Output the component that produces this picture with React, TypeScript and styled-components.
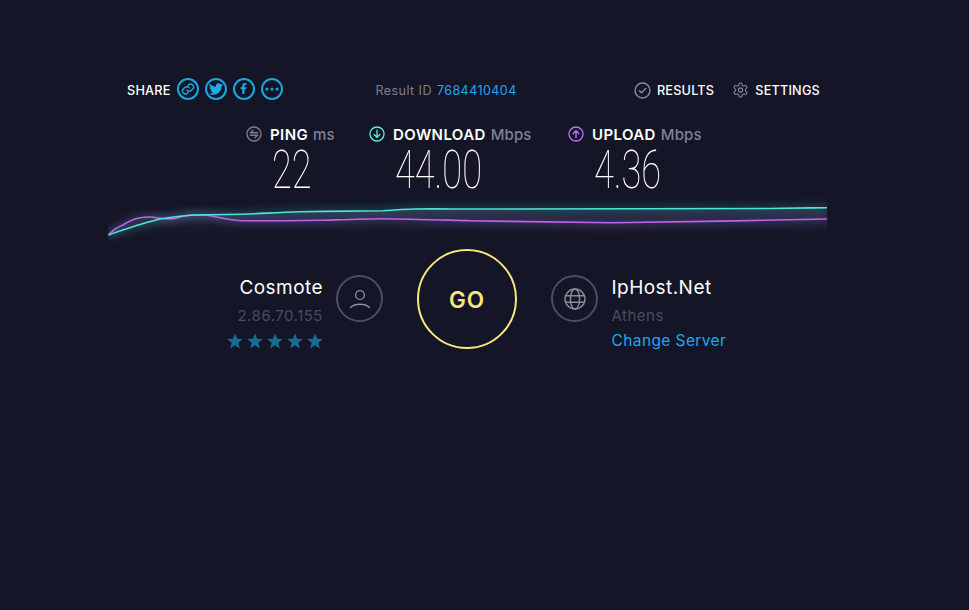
import * as React from 'react'
import styled, { createGlobalStyle } from 'styled-components'
import { FaFacebookF, FaTwitter } from 'react-icons/fa'

const GlobalStyle = createGlobalStyle`
  html, body {
    background: #141526;
    margin: 0;
    min-height: 610px;
    overflow: hidden;
  }
  body {
    color: #fff;
    font-family: Inter, "Open Sans", sans-serif;
  }
`

const Page = styled.div`
  display: flex;
  flex-direction: column;
  padding: 78px 0 0 108px;
  width: 719px;
`

const Header = styled.header`
  align-items: center;
  display: flex;
  height: 24px;
  padding: 0 7px 0 19px;
`

const ShareGroup = styled.div`
  align-items: center;
  display: flex;
  gap: 6px;
`

const NavLabel = styled.span`
  color: #fff;
  font-size: 12.7px;
  font-weight: 500;
  letter-spacing: 0.2px;
`

const ShareButton = styled.span`
  align-items: center;
  border: 2px solid #1ca5de;
  border-radius: 50%;
  box-sizing: border-box;
  color: #1cade6;
  display: flex;
  height: 22px;
  justify-content: center;
  margin-bottom: 3px;
  width: 22px;
`

const ResultId = styled.div`
  color: #7b8098;
  font-size: 12.5px;
  letter-spacing: 0.45px;
  margin-left: 93px;
`

const ResultNumber = styled.span`
  color: #1ca9f2;
  margin-left: 5px;
`

const NavGroup = styled.nav`
  align-items: center;
  display: flex;
  gap: 18px;
  margin-left: auto;
`

const NavItem = styled.span`
  align-items: center;
  display: flex;
  gap: 6px;
`

const Metrics = styled.section`
  display: flex;
  margin-top: 22px;
  padding-left: 138px;
`

const Metric = styled.div<{ $width: number }>`
  display: flex;
  flex-direction: column;
  width: ${p => p.$width}px;
`

const MetricHead = styled.div`
  align-items: center;
  display: flex;
  gap: 8px;
  height: 20px;
`

const MetricName = styled.span`
  font-size: 15px;
  font-weight: 600;
  letter-spacing: 0.4px;
  white-space: nowrap;
`

const MetricUnit = styled.span`
  color: #7e8098;
  font-weight: 500;
  letter-spacing: 0.1px;
  margin-left: 5px;
`

const MetricValue = styled.div`
  font-family: Roboto, sans-serif;
  font-size: 54px;
  font-weight: 100;
  height: 42px;
  line-height: 42px;
  margin: 5px 0 0 26px;
  transform: scaleX(0.67);
  transform-origin: left center;
  white-space: nowrap;
`

const Graph = styled.svg`
  display: block;
  height: 54px;
  margin-top: 4px;
  width: 719px;
`

const Connection = styled.section`
  align-items: flex-start;
  display: flex;
  padding-left: 108px;
`

const IspInfo = styled.div`
  align-items: flex-end;
  display: flex;
  flex-direction: column;
  margin: 26px 13px 0 0;
  width: 107px;
`

const ServerInfo = styled.div`
  display: flex;
  flex-direction: column;
  margin: 26px 0 0 13.5px;
`

const HostName = styled.div`
  font-size: 19px;
  height: 26px;
  letter-spacing: 0.45px;
  line-height: 26px;
  white-space: nowrap;
`

const SubText = styled.div`
  color: #4a4b60;
  font-size: 15px;
  height: 30px;
  letter-spacing: 0.5px;
  line-height: 30px;
  white-space: nowrap;
`

const ChangeServer = styled.a`
  color: #1ca9f2;
  font-size: 15.5px;
  height: 20px;
  letter-spacing: 0.4px;
  line-height: 20px;
  white-space: nowrap;
`

const Stars = styled.div`
  align-items: center;
  display: flex;
  gap: 4px;
  height: 20px;
`

const RingIcon = styled.div`
  align-items: center;
  border: 2px solid #4c4d60;
  border-radius: 50%;
  box-sizing: border-box;
  display: flex;
  flex: none;
  height: 47px;
  justify-content: center;
  margin-top: 26px;
  width: 47px;
`

const GoButton = styled.button`
  background: transparent;
  border: 2px solid #fbe77d;
  border-radius: 50%;
  box-sizing: border-box;
  color: #fbe77d;
  flex: none;
  font-family: inherit;
  font-size: 22.5px;
  font-weight: 600;
  height: 100px;
  letter-spacing: 1px;
  margin: 0 34px;
  padding: 0;
  width: 100px;
`

const CircleGlyph = ({ color, size, children }: { color: string; size: number; children: React.ReactNode }) => (
  <svg width={size} height={size} viewBox="0 0 18 18" fill="none" stroke={color} strokeWidth="1.5" strokeLinecap="round" strokeLinejoin="round">
    <circle cx="9" cy="9" r="7.9" />
    {children}
  </svg>
)

const Star = () => (
  <svg width="16" height="16" viewBox="0 0 16 16" fill="#166e93">
    <polygon points="8,0.4 10.1,5.7 15.8,6.1 11.4,9.7 12.8,15.4 8,12.3 3.2,15.4 4.6,9.7 0.2,6.1 5.9,5.7" />
  </svg>
)

const purple = 'M0.5 40 C5 35 10 32 15 30 C21 26 27 23.5 32 22.7 C36 22 39 22 42 22 C46 22 49 23 52 23.3 C57 23.8 61 24 65 23.7 C69 23.3 72 22 75 21.3 C79 20.4 83 20 87 20 C91 20 95 20 99 20.3 C105 21 110 22.5 115 23.3 C121 24.4 128 25.5 135 25.7 C155 26 175 25.8 212 25.3 C235 24.6 255 23.8 275 23.7 C305 24 335 25 362 25.7 C410 26.5 460 27.5 505 27.7 C570 27 650 25.5 719 24'
const teal = 'M0.5 40 C8 37 16 34.5 25 31.7 C34 29 43 26 52 24 C59 22.8 65 22 72 21.3 C77 20.7 82 20.2 87 20 C105 19.6 120 19.5 135 19.3 C155 18.5 172 17.3 192 16.7 C220 16.2 250 16.2 275 15.7 C285 15.2 295 14.3 305 14 C325 13.8 345 14 362 14 C480 14.2 600 14.2 660 13.5 C685 13 700 12.9 719 12.7'

export default function App() {
  return (
    <Page>
      <GlobalStyle />
      <Header>
        <ShareGroup>
          <NavLabel>SHARE</NavLabel>
          <ShareButton>
            <svg width="14" height="14" viewBox="0 0 24 24" fill="none" stroke="currentColor" strokeWidth="2.4" strokeLinecap="round" strokeLinejoin="round">
              <path d="M10 14a5 5 0 0 0 7.5.5l3-3a5 5 0 0 0-7-7l-1.7 1.7" />
              <path d="M14 10a5 5 0 0 0-7.5-.5l-3 3a5 5 0 0 0 7 7l1.7-1.7" />
            </svg>
          </ShareButton>
          <ShareButton><FaTwitter size={14} /></ShareButton>
          <ShareButton><FaFacebookF size={11} /></ShareButton>
          <ShareButton>
            <svg width="14" height="4" viewBox="0 0 14 4" fill="currentColor">
              <circle cx="2" cy="2" r="1.5" />
              <circle cx="7" cy="2" r="1.5" />
              <circle cx="12" cy="2" r="1.5" />
            </svg>
          </ShareButton>
        </ShareGroup>
        <ResultId>Result ID<ResultNumber>7684410404</ResultNumber></ResultId>
        <NavGroup>
          <NavItem>
            <CircleGlyph color="#8b8c9c" size={17}><path d="M5.7 9.3 8 11.5l4.4-4.6" /></CircleGlyph>
            <NavLabel>RESULTS</NavLabel>
          </NavItem>
          <NavItem>
            <svg width="17" height="18" viewBox="0 0 24 24" fill="none" stroke="#8b8c9c" strokeWidth="1.5" strokeLinecap="round" strokeLinejoin="round">
              <path d="M12.22 2h-.44a2 2 0 0 0-2 2v.18a2 2 0 0 1-1 1.73l-.43.25a2 2 0 0 1-2 0l-.15-.08a2 2 0 0 0-2.73.73l-.22.38a2 2 0 0 0 .73 2.73l.15.1a2 2 0 0 1 1 1.72v.51a2 2 0 0 1-1 1.74l-.15.09a2 2 0 0 0-.73 2.73l.22.38a2 2 0 0 0 2.73.73l.15-.08a2 2 0 0 1 2 0l.43.25a2 2 0 0 1 1 1.73V20a2 2 0 0 0 2 2h.44a2 2 0 0 0 2-2v-.18a2 2 0 0 1 1-1.73l.43-.25a2 2 0 0 1 2 0l.15.08a2 2 0 0 0 2.73-.73l.22-.39a2 2 0 0 0-.73-2.73l-.15-.08a2 2 0 0 1-1-1.74v-.5a2 2 0 0 1 1-1.74l.15-.09a2 2 0 0 0 .73-2.73l-.22-.38a2 2 0 0 0-2.73-.73l-.15.08a2 2 0 0 1-2 0l-.43-.25a2 2 0 0 1-1-1.73V4a2 2 0 0 0-2-2z" />
              <circle cx="12" cy="12" r="3" />
            </svg>
            <NavLabel>SETTINGS</NavLabel>
          </NavItem>
        </NavGroup>
      </Header>
      <Metrics>
        <Metric $width={123}>
          <MetricHead>
            <CircleGlyph color="#7e8098" size={16}>
              <path d="M13.2 7.6H4.8L8 4.8M4.8 10.4h8.4L10 13.2" />
            </CircleGlyph>
            <MetricName>PING<MetricUnit>ms</MetricUnit></MetricName>
          </MetricHead>
          <MetricValue>22</MetricValue>
        </Metric>
        <Metric $width={199}>
          <MetricHead>
            <CircleGlyph color="#5df0da" size={16}>
              <path d="M9 4.8v8M5.8 9.6 9 12.8l3.2-3.2" />
            </CircleGlyph>
            <MetricName>DOWNLOAD<MetricUnit>Mbps</MetricUnit></MetricName>
          </MetricHead>
          <MetricValue>44.00</MetricValue>
        </Metric>
        <Metric $width={200}>
          <MetricHead>
            <CircleGlyph color="#bf71f4" size={16}>
              <path d="M9 13.2v-8M5.8 8.4 9 5.2l3.2 3.2" />
            </CircleGlyph>
            <MetricName>UPLOAD<MetricUnit>Mbps</MetricUnit></MetricName>
          </MetricHead>
          <MetricValue>4.36</MetricValue>
        </Metric>
      </Metrics>
      <Graph viewBox="0 0 719 54" fill="none">
        <defs>
          <linearGradient id="underGlow" x1="0" x2="0" y1="8" y2="48" gradientUnits="userSpaceOnUse">
            <stop offset="0" stopColor="#3a4466" stopOpacity="0.6" />
            <stop offset="1" stopColor="#141526" stopOpacity="0" />
          </linearGradient>
          <filter id="soft" x="-5%" y="-100%" width="110%" height="300%">
            <feGaussianBlur stdDeviation="4.5" />
          </filter>
        </defs>
        <path d={`${teal} L719 44 L0.5 44 Z`} fill="url(#underGlow)" />
        <path d={teal} stroke="#3ff0d9" strokeWidth="6" opacity="0.22" filter="url(#soft)" />
        <path d={purple} stroke="#bf71f4" strokeWidth="6" opacity="0.26" filter="url(#soft)" />
        <path d={purple} stroke="#b569ea" strokeWidth="1.6" />
        <path d={teal} stroke="#4be6d6" strokeWidth="1.6" />
      </Graph>
      <Connection>
        <IspInfo>
          <HostName>Cosmote</HostName>
          <SubText>2.86.70.155</SubText>
          <Stars>
            <Star /><Star /><Star /><Star /><Star />
          </Stars>
        </IspInfo>
        <RingIcon>
          <svg width="22" height="22" viewBox="0 0 22 22" fill="none" stroke="#8b8c9c" strokeWidth="1.4" strokeLinecap="round">
            <circle cx="11" cy="7" r="4.4" />
            <path d="M1.5 19.5c2.5-2.4 6-3.2 9.5-3.2s7 .8 9.5 3.2" />
          </svg>
        </RingIcon>
        <GoButton>GO</GoButton>
        <RingIcon>
          <svg width="22" height="22" viewBox="0 0 22 22" fill="none" stroke="#8b8c9c" strokeWidth="1.4">
            <circle cx="11" cy="11" r="10" />
            <ellipse cx="11" cy="11" rx="4.6" ry="10" />
            <path d="M1.5 7.7h19M1.5 14.3h19" />
          </svg>
        </RingIcon>
        <ServerInfo>
          <HostName>IpHost.Net</HostName>
          <SubText>Athens</SubText>
          <ChangeServer>Change Server</ChangeServer>
        </ServerInfo>
      </Connection>
    </Page>
  )
}
